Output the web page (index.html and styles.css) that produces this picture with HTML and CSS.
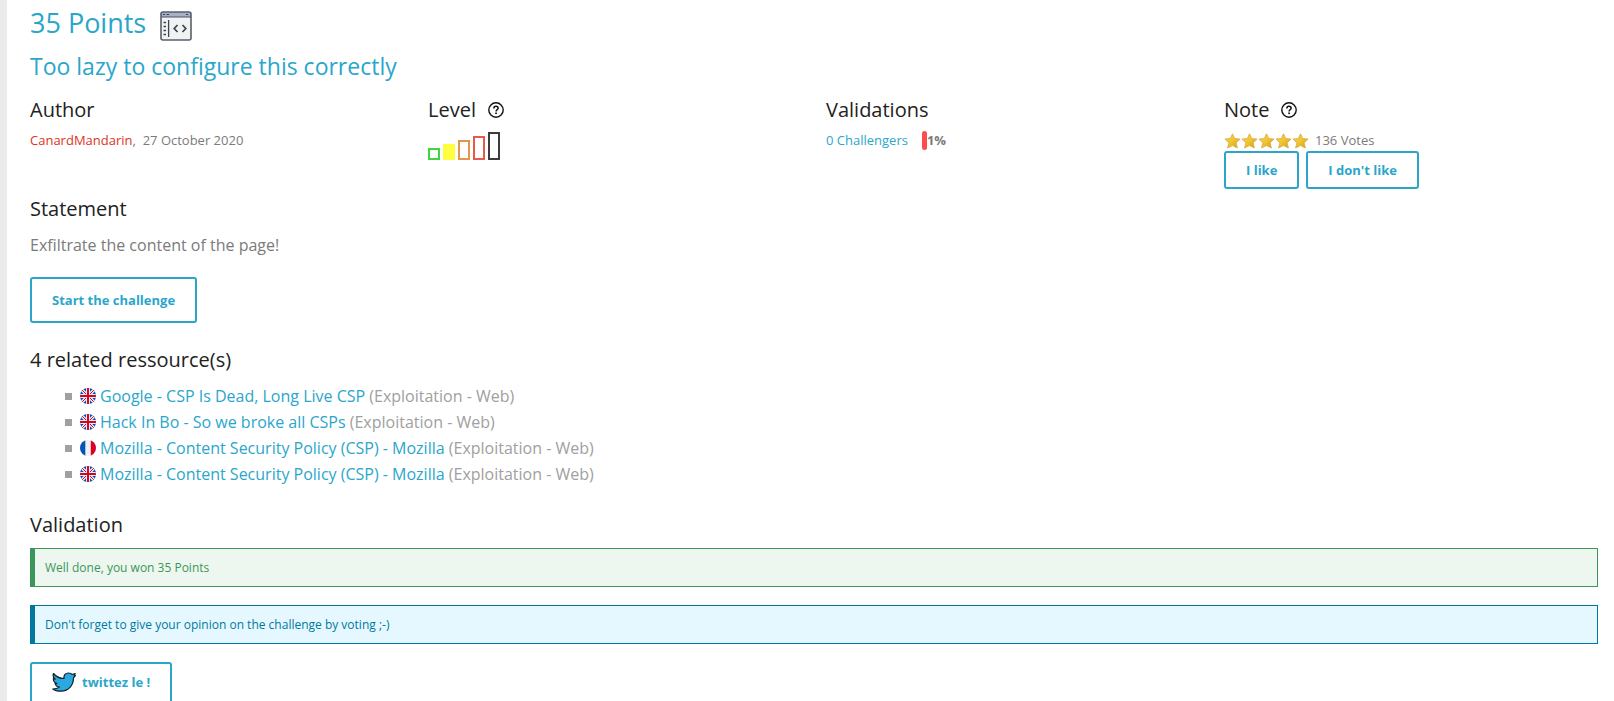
FILE: index.html
```html
<!DOCTYPE html>
<html lang="en">
<head>
<meta charset="utf-8">
<title>Too lazy to configure this correctly</title>
<link rel="stylesheet" href="styles.css">
</head>
<body>
<svg class="defs" aria-hidden="true">
  <defs>
    <linearGradient id="gold" x1="0" y1="0" x2="1" y2="1">
      <stop offset="0" stop-color="#f6d65c"/><stop offset=".5" stop-color="#f0c62e"/><stop offset="1" stop-color="#cf981f"/>
    </linearGradient>
    <symbol id="star" viewBox="0 0 17 16">
      <path d="M8.5 .8l2.2 4.8 5.4.5-4 3.6 1.3 5.3-4.9-2.5-4.9 2.5 1.3-5.3-4-3.6 5.4-.5z" fill="url(#gold)" stroke="#dfae4d" stroke-width=".9" stroke-linejoin="round"/>
    </symbol>
    <symbol id="help" viewBox="0 0 16 16">
      <circle cx="8" cy="8" r="7.2" fill="none" stroke="#111" stroke-width="1.4"/>
      <path d="M5.9 6.4c0-1.3.9-2.1 2.1-2.1s2.1.8 2.1 1.9c0 1.4-2 1.6-2 3.2" fill="none" stroke="#111" stroke-width="1.5"/>
      <rect x="7.2" y="10.5" width="1.7" height="1.6" fill="#111"/>
    </symbol>
    <clipPath id="round"><circle cx="8" cy="8" r="8"/></clipPath>
    <symbol id="uk" viewBox="0 0 16 16">
      <g clip-path="url(#round)">
        <rect width="16" height="16" fill="#0052b4"/>
        <path d="M0 0L16 16M16 0L0 16" stroke="#f0f0f0" stroke-width="3.2"/>
        <path d="M0 0L16 16M16 0L0 16" stroke="#d80027" stroke-width="1"/>
        <path d="M8 0V16M0 8H16" stroke="#f0f0f0" stroke-width="4"/>
        <path d="M8 0V16M0 8H16" stroke="#d80027" stroke-width="2"/>
      </g>
    </symbol>
    <symbol id="fr" viewBox="0 0 16 16">
      <g clip-path="url(#round)">
        <rect width="16" height="16" fill="#f0f0f0"/>
        <rect width="5.3" height="16" fill="#0052b4"/>
        <rect x="10.8" width="5.3" height="16" fill="#d80027"/>
      </g>
    </symbol>
  </defs>
</svg>
<main class="page">
  <h1 class="points">35 Points
    <svg class="points-icon" viewBox="0 0 32 30" role="img" aria-label="Web - Client">
      <rect x="1" y="1" width="30" height="28" rx="2" fill="#f0f3f2"/>
      <rect x="1" y="1" width="30" height="5" fill="#a3b1c9"/>
      <path d="M1 6H31" stroke="#4c5160" stroke-width="1"/>
      <rect x="1" y="1" width="30" height="28" rx="2" fill="none" stroke="#5b5f6a" stroke-width="1.6"/>
      <path d="M3 3.500H5M6.500 3.500H9M26 3.500H28" stroke="#3f4350"/>
      <path d="M3.500 11.500H6M3.500 15.500H6M3.500 19.500H6M3.500 23.500H6" stroke="#3f4350" stroke-width="1.500"/>
      <path d="M8.600 9V26" stroke="#3f4350" stroke-width="1.300"/>
      <path d="M17.500 14L14.200 17.500L17.500 21M22.500 14L25.800 17.500L22.500 21" fill="none" stroke="#3f4350" stroke-width="1.700"/>
    </svg>
  </h1>
  <h2 class="title">Too lazy to configure this correctly</h2>

  <div class="facts">
    <section>
      <h3 class="heading">Author</h3>
      <p class="fact"><a class="author" href="#author">CanardMandarin</a>,&nbsp; 27 October 2020</p>
    </section>
    <section>
      <h3 class="heading">Level <svg class="help" role="img" aria-label="Help"><use href="#help"/></svg></h3>
      <div class="level" role="img" aria-label="Level: easy">
        <span class="bar very-easy"></span><span class="bar easy"></span><span class="bar medium"></span><span class="bar hard"></span><span class="bar very-hard"></span>
      </div>
    </section>
    <section>
      <h3 class="heading">Validations</h3>
      <p class="fact rate"><a href="#challengers">0 Challengers</a><span class="gauge"></span><b>1%</b></p>
    </section>
    <section>
      <h3 class="heading">Note <svg class="help" role="img" aria-label="Help"><use href="#help"/></svg></h3>
      <p class="fact votes"><span class="stars" role="img" aria-label="5 stars"><svg><use href="#star"/></svg><svg><use href="#star"/></svg><svg><use href="#star"/></svg><svg><use href="#star"/></svg><svg><use href="#star"/></svg></span>136 Votes</p>
      <div class="vote-buttons">
        <button class="button small" type="button">I like</button>
        <button class="button small" type="button">I don't like</button>
      </div>
    </section>
  </div>

  <h3 class="heading">Statement</h3>
  <p class="statement">Exfiltrate the content of the page!</p>
  <a class="button" href="#start">Start the challenge</a>

  <h3 class="heading resources-heading">4 related ressource(s)</h3>
  <ul class="resources">
    <li><svg class="flag"><use href="#uk"/></svg><span><a href="#r1">Google - CSP Is Dead, Long Live CSP</a> (Exploitation - Web)</span></li>
    <li><svg class="flag"><use href="#uk"/></svg><span><a href="#r2">Hack In Bo - So we broke all CSPs</a> (Exploitation - Web)</span></li>
    <li><svg class="flag"><use href="#fr"/></svg><span><a href="#r3">Mozilla - Content Security Policy (CSP) - Mozilla</a> (Exploitation - Web)</span></li>
    <li><svg class="flag"><use href="#uk"/></svg><span><a href="#r4">Mozilla - Content Security Policy (CSP) - Mozilla</a> (Exploitation - Web)</span></li>
  </ul>

  <h3 class="heading">Validation</h3>
  <div class="alert success">Well done, you won 35 Points</div>
  <div class="alert info">Don't forget to give your opinion on the challenge by voting ;-)</div>
  <a class="button tweet" href="#tweet"><svg class="bird" viewBox="0 0 24 20" aria-hidden="true"><path d="M1.500 1.500C4 4.500 7.500 6.500 12 6.500C11.500 3 13.500 1 16.500 1C18.300 1 19.500 1.600 20.300 2.500L23.200 1.500L22.300 3.600L23.400 3.500L21.500 5.800C21.500 13 17 19.200 9 19.200C5.500 19.200 2.500 18.400.8 17C3.500 17 5.800 16.300 7.500 15C5.300 14.800 3.700 13.500 3 11.600L5 11.500C2.800 10.800 1.300 9 1.300 6.700L3.300 7.200C1.200 5.600.7 3.500 1.500 1.500Z" fill="#2aa9e0" stroke="#161f26" stroke-width="1.200" stroke-linejoin="round"/></svg>twittez le !</a>
</main>
</body>
</html>
```
FILE: styles.css
```css
* { box-sizing: border-box; }

body {
  margin: 0;
  background: #fff;
  border-left: 7px solid #ebebeb;
  color: #7b7b7b;
  font: 16px/26px "Open Sans", "Noto Sans", sans-serif;
  overflow: hidden;
}

h1, h2, h3, p, ul { margin: 0; padding: 0; font-weight: 400; }
a { color: #2ba6cb; text-decoration: none; }
.defs { position: absolute; width: 0; height: 0; }

.page {
  height: 100vh;
  padding: 3px 16px 0 23px;
}

.points {
  display: flex;
  align-items: center;
  gap: 14px;
  color: #2ba6cb;
  font-size: 27px;
  line-height: 40px;
}
.points-icon { width: 32px; height: 30px; margin-top: 6px; }

.title {
  margin-bottom: 11px;
  color: #2ba6cb;
  font-size: 23px;
  line-height: 46px;
}

.heading {
  display: flex;
  align-items: center;
  gap: 12px;
  color: #222;
  font-size: 20px;
  line-height: 20px;
}
.help { width: 16px; height: 16px; }

.facts {
  display: grid;
  grid-template-columns: repeat(4, 1fr);
  gap: 24px;
  margin-bottom: 10px;
}

.fact {
  display: flex;
  align-items: center;
  margin-top: 10px;
  font-size: 13px;
  line-height: 21px;
}
.author { color: #e0321c; }

.level {
  display: flex;
  align-items: flex-end;
  gap: 3px;
  height: 28px;
  margin-top: 12px;
}
.bar { width: 12px; border: 2px solid; }
.very-easy { height: 12px; color: #3fd63f; }
.easy { height: 16px; color: #ffff40; background: #ffff40; }
.medium { height: 20px; color: #e5964b; }
.hard { height: 24px; color: #e65a4b; }
.very-hard { height: 28px; color: #3c3c3c; }

.gauge {
  width: 5px;
  height: 19px;
  margin-left: 14px;
  border-radius: 3px;
  background: #ff4b4b;
}

.votes { gap: 6px; }
.stars { display: flex; }
.stars svg { width: 17px; height: 16px; }
.vote-buttons { display: flex; gap: 7px; }

.button {
  display: inline-flex;
  align-items: center;
  gap: 6px;
  padding: 10px 20px;
  border: 2px solid #2ba6cb;
  border-radius: 3px;
  background: #fff;
  color: #2ba6cb;
  font: bold 13px/22px "Open Sans", "Noto Sans", sans-serif;
}
.small { padding: 6px 20px; }
.tweet { padding: 7px 20px 12px; }
.bird { width: 24px; height: 20px; }

.statement { margin: 13px 0 19px; }

.resources-heading { margin-top: 27px; }
.resources {
  margin: 13px 0 28px 35px;
  list-style: none;
  color: #a0a0a0;
}
.resources li { display: flex; align-items: center; gap: 4px; }
.resources li::before {
  content: "";
  width: 7px;
  height: 7px;
  margin-right: 4px;
  background: #a0a0a0;
}
.flag { width: 16px; height: 16px; }

.alert {
  margin-bottom: 18px;
  padding: 8px 10px;
  border: 1px solid;
  border-left-width: 5px;
  font-size: 12px;
  line-height: 21px;
}
.success { margin-top: 13px; color: #3c965a; background: #edf7ef; }
.info { color: #0078a0; background: #e5f8ff; }
```
